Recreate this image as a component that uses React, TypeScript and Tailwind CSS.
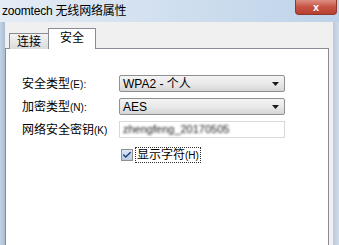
import { Check } from "lucide-react";

const FONT = "font-['Liberation_Sans','Noto_Sans_CJK_SC',sans-serif]";

function Select({ value }: { value: string }) {
  return (
    <div className="flex h-[17px] w-[166px] items-center justify-between rounded-[2px] border border-[#8e8f8f] bg-gradient-to-b from-[#f4f4f4] via-[#e9e9e9] to-[#d6d6d6] pl-[3px] pr-[5px]">
      <span className="text-[12px] leading-none text-black">{value}</span>
      <svg width="7" height="4" viewBox="0 0 7 4">
        <path d="M0 0h7L3.5 4z" fill="#1a1a1a" />
      </svg>
    </div>
  );
}

function Label({ text, key_, colon }: { text: string; key_: string; colon?: boolean }) {
  return (
    <span>
      {text}
      <span className="text-[10px]">({key_}){colon ? ":" : ""}</span>
    </span>
  );
}

export default function App() {
  return (
    <div className={`flex h-[245px] w-[339px] flex-col overflow-hidden ${FONT}`}>
      {/* Title bar */}
      <div className="relative flex h-[22px] shrink-0 items-center bg-gradient-to-r from-[#e4ecf5] via-[#d0dfef] to-[#bed3e9] pl-[2px]">
        <span className="text-[12px] leading-none tracking-[-0.2px] text-black">zoomtech 无线网络属性</span>
        <div className="absolute right-[2px] top-0 flex h-[15px] w-[42px] items-center justify-center rounded-b-[4px] border border-t-0 border-[#8a3a30] bg-gradient-to-b from-[#dc8f82] via-[#c65444] to-[#b8402f]">
          <span className="text-[11px] font-bold leading-none text-white">x</span>
        </div>
      </div>

      <div className="flex flex-1">
        <div className="w-[5px] shrink-0 bg-gradient-to-r from-[#c4d4e6] to-[#a9bcd2]" />
        <div className="flex flex-1 flex-col bg-[#f0f0f0] pr-[4px]">
          {/* Tabs */}
          <div className="relative z-10 flex h-[27px] shrink-0 items-end pl-[4px]">
            <div className="flex h-[16px] w-[40px] items-center justify-center border border-b-0 border-[#898c95] bg-gradient-to-b from-[#f3f3f3] to-[#dcdcdc] text-[12px] leading-none text-black">
              连接
            </div>
            <div className="-ml-px flex h-[21px] w-[48px] items-start justify-center border border-b-0 border-[#898c95] bg-white pt-[3px] text-[12px] leading-none text-black">
              安全
            </div>
          </div>
          {/* Panel */}
          <div className="-mt-px flex-1 border border-b-0 border-[#898c95] bg-white pl-[16px] pt-[26px]">
            <div className="grid grid-cols-[97px_166px] items-center gap-y-[6px] text-[12px] leading-none text-black">
              <Label text="安全类型" key_="E" colon />
              <Select value="WPA2 - 个人" />
              <Label text="加密类型" key_="N" colon />
              <Select value="AES" />
              <Label text="网络安全密钥" key_="K" />
              <div className="flex h-[17px] items-center border border-[#d9d9d9] bg-white pl-[3px]">
                <span className="text-[11px] leading-none text-[#1a1a1a] blur-[0.8px]">zhengfeng_20170505</span>
              </div>
              <span />
              <div className="mt-[3px] flex items-center gap-[2px] pl-[2px]">
                <div className="flex h-[12px] w-[12px] items-center justify-center border border-[#8f8f8f] bg-gradient-to-b from-[#dbe7f5] to-[#b7cbe3]">
                  <Check size={10} strokeWidth={3.5} className="text-[#1f3f7a]" />
                </div>
                <span className="border border-dotted border-[#333] px-px py-px">
                  显示字符<span className="text-[10px]">(H)</span>
                </span>
              </div>
            </div>
          </div>
        </div>
        <div className="w-[6px] shrink-0 bg-gradient-to-r from-[#b9c9db] to-[#cfdcec]" />
      </div>
    </div>
  );
}
